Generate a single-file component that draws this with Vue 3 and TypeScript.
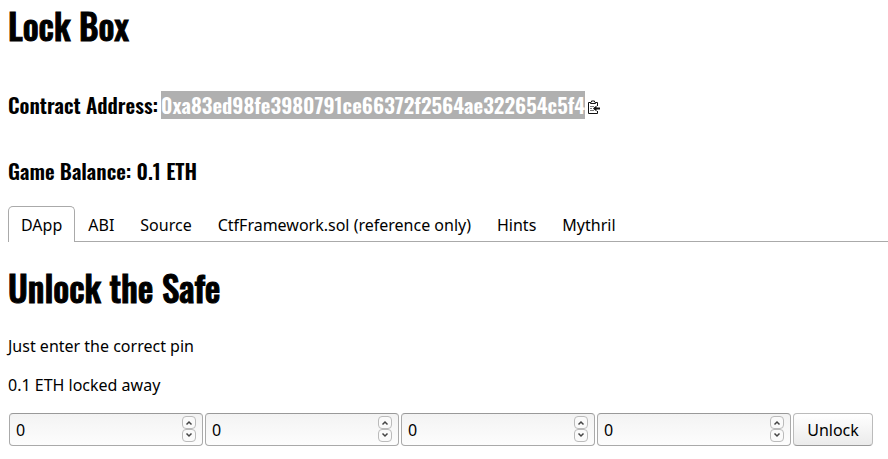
<script setup lang="ts">
import { ref } from 'vue'

const address = '0xa83ed98fe3980791ce66372f2564ae322654c5f4'
const tabs = ['DApp', 'ABI', 'Source', 'CtfFramework.sol (reference only)', 'Hints', 'Mythril']
const activeTab = ref('DApp')
const pin = ref<number[]>([0, 0, 0, 0])

function copyAddress(): void {
  void navigator.clipboard?.writeText(address)
}
</script>

<template>
  <main class="page">
    <h1 class="title">Lock Box</h1>
    <h3 class="line">
      <span>Contract Address:</span>
      <span class="address">{{ address }}</span>
      <button class="copy" type="button" aria-label="Copy address" @click="copyAddress">
        <svg viewBox="0 0 12 14" width="12" height="14" fill="none" stroke="#111">
          <path d="M9.5 6V2.5H.5v11h9V11" />
          <path d="M2.5 3.5h5v-1L6.5 2V1h-3v1l-1 .5z" fill="#fff" />
          <path d="M2 6.5h4M2 8.5h2M2 10.5h4" stroke="#777" />
          <path d="M12 8.5H6" stroke-width="2" />
          <path d="M5 8.5 8.5 5.5v6z" fill="#111" stroke="none" />
        </svg>
      </button>
    </h3>
    <h3 class="line">Game Balance: 0.1 ETH</h3>

    <nav class="tabs" role="tablist">
      <button
        v-for="tab in tabs"
        :key="tab"
        class="tab"
        :class="{ active: tab === activeTab }"
        type="button"
        role="tab"
        :aria-selected="tab === activeTab"
        @click="activeTab = tab"
      >{{ tab }}</button>
    </nav>

    <h1 class="title section">Unlock the Safe</h1>
    <p class="text">Just enter the correct pin</p>
    <p class="text">0.1 ETH locked away</p>

    <form class="pin" @submit.prevent>
      <div v-for="(_, i) in pin" :key="i" class="field">
        <input v-model.number="pin[i]" class="digit" type="number" :aria-label="`Pin digit ${i + 1}`" />
        <div class="spin">
          <button class="step" type="button" aria-label="Increase" @click="pin[i]++">
            <svg viewBox="0 0 12 11" width="12" height="11"><path d="M3.5 7.5 6 5l2.5 2.5" /></svg>
          </button>
          <button class="step" type="button" aria-label="Decrease" @click="pin[i]--">
            <svg viewBox="0 0 12 11" width="12" height="11"><path d="M3.5 3.5 6 6l2.5-2.5" /></svg>
          </button>
        </div>
      </div>
      <button class="unlock" type="submit">Unlock</button>
    </form>
  </main>
</template>

<style>
body {
  background: #fff;
}
</style>

<style scoped>
.page {
  padding-left: 8px;
  color: #000;
  font: 16px/24px "Noto Sans", "Open Sans", sans-serif;
}
.title,
.line {
  margin: 0;
  font-family: Oswald, "Roboto Condensed", "Liberation Sans Narrow", sans-serif;
}
.title {
  font-size: 35px;
  font-weight: 500;
  line-height: 50px;
  -webkit-text-stroke: 1px currentColor;
}
.line {
  display: flex;
  align-items: center;
  gap: 3px;
  margin-top: 38px;
  font-size: 21px;
  font-weight: 600;
  line-height: 28px;
}
.title + .line {
  margin-top: 41px;
}
.address {
  background: #b0b0b0;
  color: #fff;
}
.copy {
  display: flex;
  padding: 4px 0 0;
  border: 0;
  background: none;
}
.tabs {
  display: flex;
  margin-top: 21px;
  border-bottom: 1px solid #aaa;
}
.tab {
  margin-bottom: -1px;
  padding: 6px 12px 5px;
  border: 1px solid transparent;
  border-bottom: 0;
  border-radius: 5px 5px 0 0;
  background: none;
  color: inherit;
  font: inherit;
}
.tab.active {
  border-color: #aaa;
  background: #fff;
}
.section {
  margin-top: 20px;
}
.text {
  margin: 15px 0 0;
}
.section + .text {
  margin-top: 22px;
}
.pin {
  display: flex;
  gap: 2px;
  margin: 16px 15px 0 1px;
}
.field {
  position: relative;
  flex: 1;
  min-width: 0;
}
.digit {
  box-sizing: border-box;
  display: block;
  width: 100%;
  height: 33px;
  padding: 0 28px 0 6px;
  border: 1px solid #aaa;
  border-top-color: #999;
  border-radius: 4px;
  background: linear-gradient(#f3f3f3, #fdfdfd);
  color: inherit;
  font: inherit;
  appearance: textfield;
}
.digit::-webkit-inner-spin-button {
  appearance: none;
  margin: 0;
}
.spin {
  position: absolute;
  top: 3px;
  right: 7px;
  display: grid;
}
.step {
  display: flex;
  padding: 0;
  border: 1px solid #bbb;
  border-radius: 4px;
  background: #fafafa;
}
.step path {
  fill: none;
  stroke: #444;
  stroke-width: 1.5;
}
.unlock {
  width: 80px;
  height: 33px;
  padding: 0;
  border: 1px solid #bbb;
  border-bottom-color: #999;
  border-radius: 4px;
  background: linear-gradient(#fff, #ebebeb);
  color: inherit;
  font: inherit;
}
</style>
